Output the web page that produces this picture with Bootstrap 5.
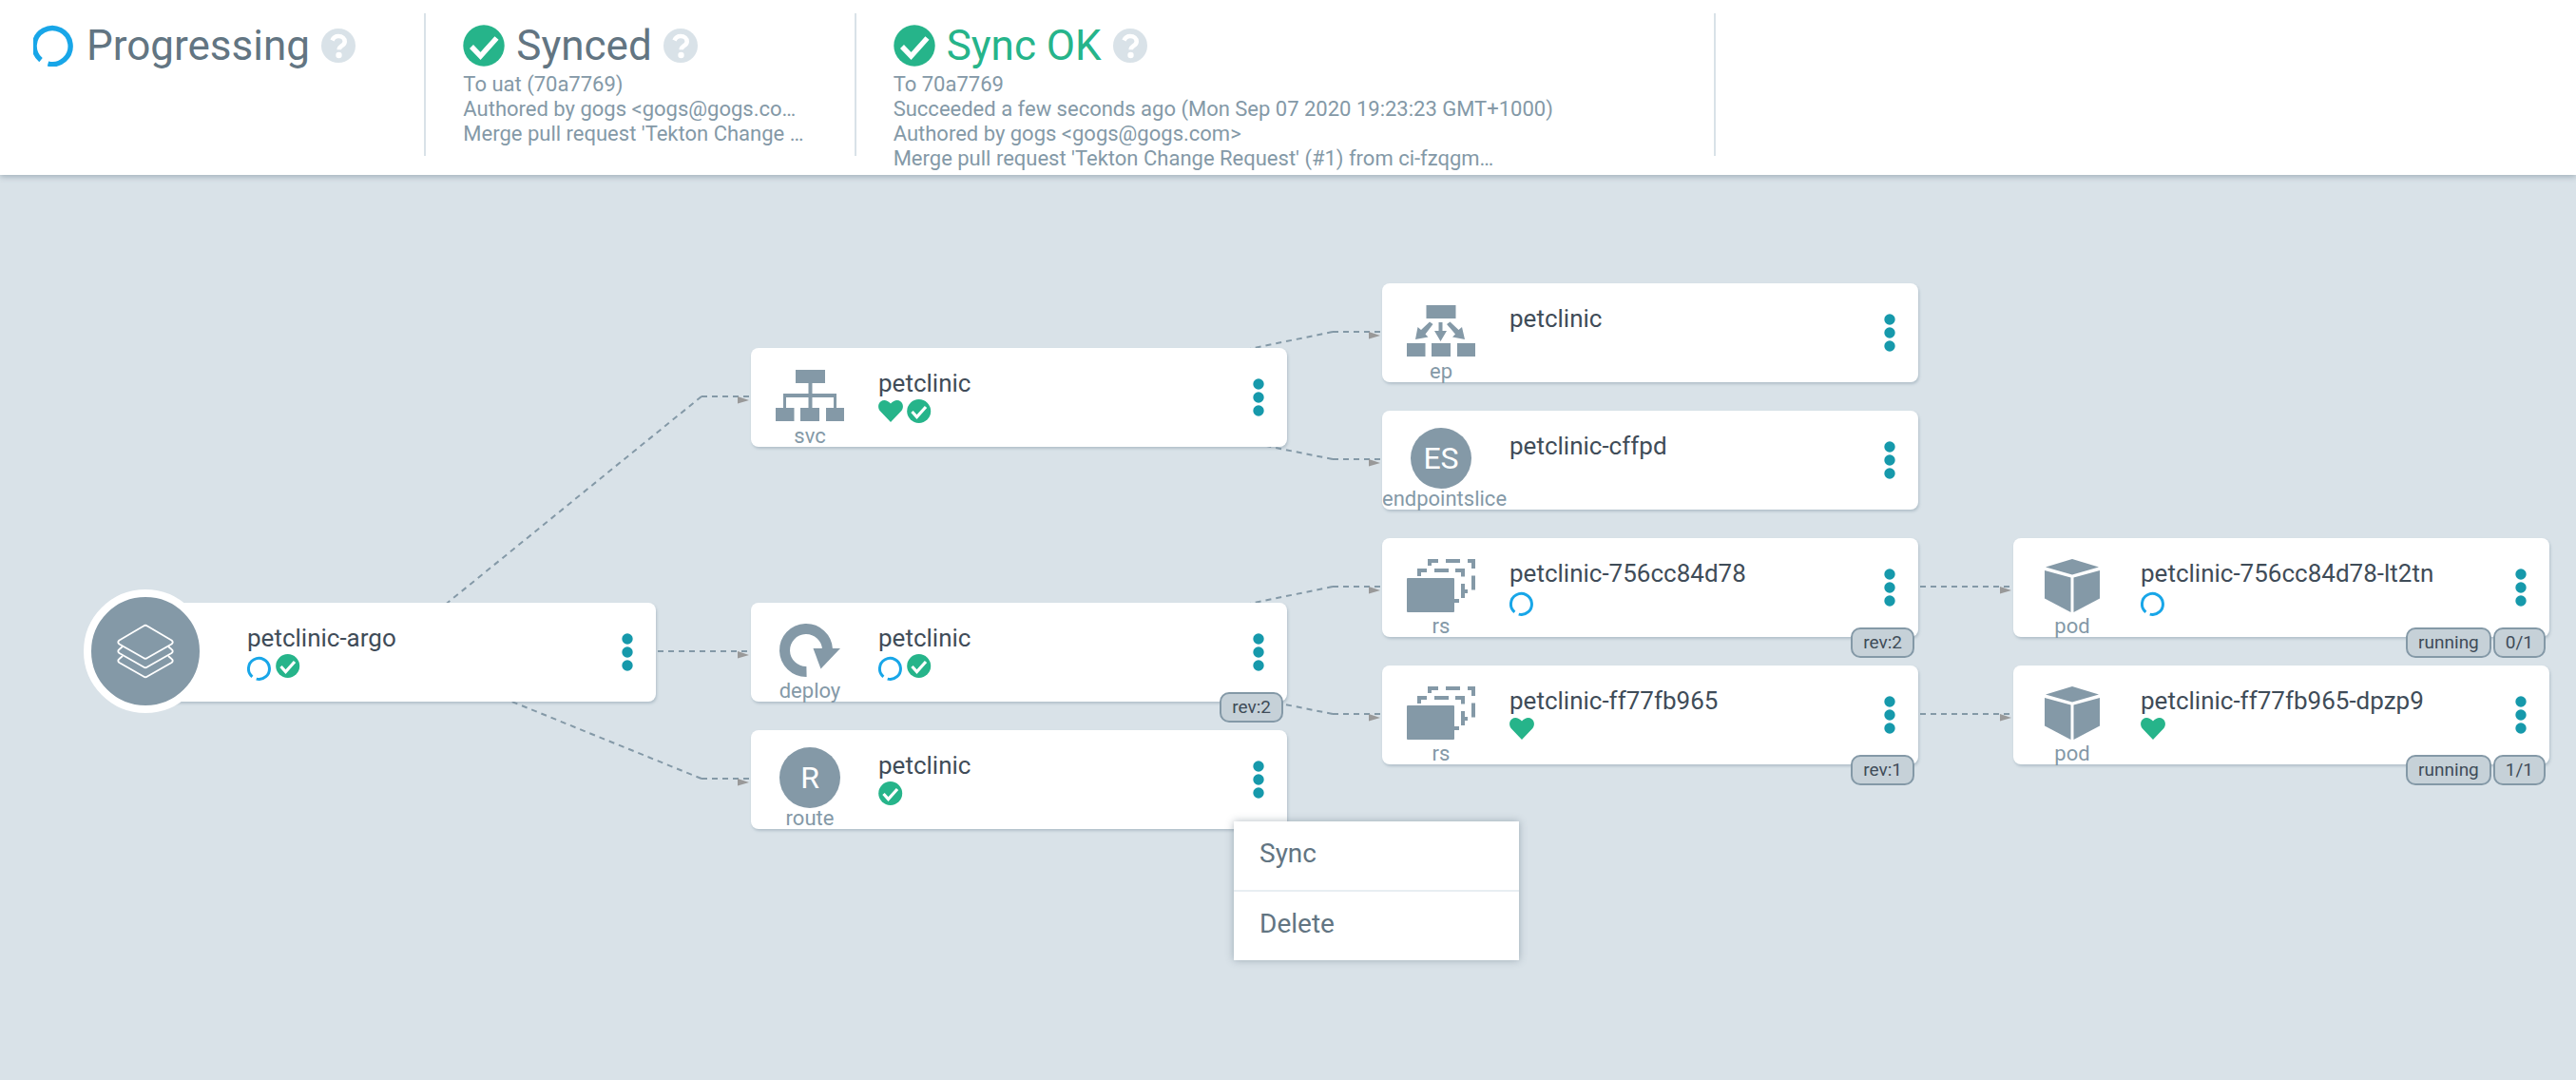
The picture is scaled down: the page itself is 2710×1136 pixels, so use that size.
<!DOCTYPE html>
<html lang="en">
<head>
<meta charset="utf-8">
<meta name="viewport" content="width=device-width, initial-scale=1">
<title>petclinic-argo</title>
<link href="https://cdn.jsdelivr.net/npm/bootstrap@5.3.0/dist/css/bootstrap.min.css" rel="stylesheet">
<style>
  :root { --slate: #8499a7; --ink: #3f4c58; --title: #627582; --canvas: #d9e2e8; --ok: #26b48a; --busy: #18a6e8; --teal: #1699ab; }
  body { font-family: Roboto, "Liberation Sans", sans-serif; background: var(--canvas); color: var(--ink); }
  .status-bar { padding: 14px 0 20px; box-shadow: 0 2px 6px rgba(95, 115, 130, .45); z-index: 2; }
  .status-row { margin-left: -4px; margin-right: 0; }
  .status-item { height: 150px; padding: 0 0 0 39px; border-right: 2px solid var(--canvas); color: var(--slate); font-size: 22px; line-height: 26px; white-space: nowrap; }
  .status-title { font-size: 44px; line-height: 56px; height: 62px; gap: 12px; color: var(--title); font-weight: 400; margin: 0; padding-top: 6px; }
  .status-title.is-ok { color: var(--ok); }
  .status-title svg { width: 44px; height: 44px; }
  .help-btn, .kebab-btn { border: 0; background: none; padding: 0; line-height: 0; }
  .status-title .help-btn svg { width: 36px; height: 36px; }
  .tree { min-height: 840px; }
  .edges { left: 0; top: 0; width: 100%; height: 100%; pointer-events: none; }
  .node { width: 564px; height: 104px; background: #fff; border-radius: 8px; box-shadow: 1px 2px 3px rgba(120, 142, 158, .4); }
  .node-kind { width: 124px; padding-top: 18px; color: var(--slate); font-size: 22px; line-height: 22px; flex: none; align-items: safe center; }
  .node-kind svg { width: 72px; height: 64px; flex: none; }
  .letter { width: 64px; height: 64px; background: var(--slate); color: #fff; font-size: 32px; line-height: 64px; text-align: center; }
  .node-body { padding: 22px 0 0 10px; }
  .node-name { font-size: 26px; line-height: 30px; white-space: nowrap; }
  .node-state { gap: 4px; }
  .node-state svg { width: 26px; height: 30px; }
  .kebab-btn { margin-right: 22px; width: 16px; }
  .kebab-btn svg { width: 12px; height: 42px; }
  .root-disc { left: -38px; top: -14px; width: 130px; height: 130px; border: 8px solid #fff; background: var(--slate); }
  .root-disc svg { width: 60px; height: 60px; }
  .tags { right: 4px; bottom: -22px; gap: 2px; }
  .tag-box { height: 32px; padding: 0 11px; border: 2px solid var(--slate); border-radius: 10px; background: #c6d1d8; font-size: 19px; line-height: 27px; }
  .c0 { left: 126px; } .c1 { left: 790px; } .c2 { left: 1454px; } .c3 { left: 2118px; }
  .r0 { top: 114px; } .r1 { top: 182px; } .r2 { top: 248px; } .r3 { top: 382px; } .r4 { top: 450px; } .r5 { top: 516px; } .r6 { top: 584px; }
  .node-menu { left: 1298px; top: 680px; width: 300px; background: #fff; box-shadow: 0 0 8px rgba(85, 105, 120, .45); }
  .node-menu button { border: 0; background: none; color: var(--title); font-size: 28px; line-height: 32px; padding: 18px 27px 22px; }
  .node-menu li + li { border-top: 2px solid #e8eef2; }
</style>
<script src="https://cdn.jsdelivr.net/npm/bootstrap@5.3.0/dist/js/bootstrap.bundle.min.js"></script>
</head>
<body class="d-flex flex-column min-vh-100">
<svg width="0" height="0" class="position-absolute" aria-hidden="true">
  <symbol id="check" viewBox="0 0 44 44"><circle cx="22" cy="22" r="21.700" fill="#26b48a"/><path d="M9 23l9.500 10L35.500 14" fill="none" stroke="#fff" stroke-width="5.500"/></symbol>
  <symbol id="help" viewBox="0 0 36 36"><circle cx="18" cy="18" r="18" fill="#d9e2e8"/><path d="M11.500 12.500C13 9 15.500 8 18 8c4 0 6.700 2.600 6.700 5.700 0 4.600-6 4.400-6 8.600" fill="none" stroke="#fff" stroke-width="4.600"/><circle cx="18.500" cy="28" r="3.200" fill="#fff"/></symbol>
  <symbol id="s-check" viewBox="0 0 26 30"><circle cx="12.700" cy="14.500" r="12.500" fill="#26b48a"/><path d="M5.500 15l5 5.500L20 10" fill="none" stroke="#fff" stroke-width="3.200"/></symbol>
  <symbol id="s-heart" viewBox="0 0 26 30"><path d="M13 26L1.800 14.200C-.8 11-.3 6.500 2.300 4.400 5.500 2 9.500 2.600 13 6.600c3.500-4 7.500-4.600 10.700-2.200 2.600 2.100 3.100 6.600.5 9.800z" fill="#26b48a"/></symbol>
  <symbol id="s-busy" viewBox="0 0 26 30"><path d="M5.400 25.900A11 11 0 1 1 9.700 28.100" fill="none" stroke="#18a6e8" stroke-width="3"/></symbol>
  <symbol id="dots" viewBox="0 0 12 42"><g fill="#1699ab"><circle cx="6" cy="7" r="5.700"/><circle cx="6" cy="21" r="5.700"/><circle cx="6" cy="35" r="5.700"/></g></symbol>
  <symbol id="k-svc" viewBox="0 0 72 64"><g fill="#8499a7"><path d="M21 5h31v14H21zM0 45h19.500v14H0zM26 45h20v14H26zM53 45h19v14H53z"/><path d="M34.500 19h4v26h-4zM8 30h56v15h-3V34H11v11H8z"/></g></symbol>
  <symbol id="k-ep" viewBox="0 0 72 64"><g fill="#8499a7"><path d="M20.500 5h31v14h-31zM0 45h19.500v14H0zM26 45h20v14H26zM53 45h19v14H53z"/><path d="M33.500 23h4v9h4.500l-6.500 11L29 32h4.500z"/><path d="M24 22.500l3.500 2.500-8 10.500 3 3-13.500 2.500 2.500-13 3.500 3z"/><path d="M45.500 22.500L42 25l9 10.500-3 3L61 41l-3-13-3.500 3z"/></g></symbol>
  <symbol id="k-deploy" viewBox="0 0 72 64"><path d="M32.500 54.500A22.500 22.500 0 1 1 54.500 31" fill="none" stroke="#8499a7" stroke-width="11"/><path d="M39.500 30H68L47.500 51.500z" fill="#8499a7"/></symbol>
  <symbol id="k-rs" viewBox="0 0 72 64"><rect x="0" y="24" width="50" height="36" rx="1" fill="#8499a7"/><g fill="none" stroke="#8499a7" stroke-width="4"><path d="M13 22v-6h8M29 16h15M51 16h8v6.500M59 30v15M59 38h5M50 48h5"/><path d="M24 11V6h9M41 6h15M64 6h6v8M70 21.500v15"/></g></symbol>
  <symbol id="k-pod" viewBox="0 0 72 64"><g fill="#8499a7"><path d="M36 4l28 8.500L36 20.500 8 12.500z"/><path d="M7 16l27.500 7.500V60L7 45.500z"/><path d="M65 16l-27.500 7.500V60L65 45.500z"/></g></symbol>
</svg>

<header class="status-bar bg-white position-relative">
  <div class="row g-0 status-row">
    <section class="col-2 status-item">
      <h1 class="status-title d-flex align-items-center"><svg viewBox="0 0 44 44" aria-hidden="true"><path d="M8 37.200A19 19 0 1 1 15.500 41" fill="none" stroke="#18a6e8" stroke-width="5.400"/></svg>Progressing<button class="help-btn" aria-label="Health help"><svg><use href="#help"/></svg></button></h1>
    </section>
    <section class="col-2 status-item">
      <h2 class="status-title d-flex align-items-center"><svg aria-hidden="true"><use href="#check"/></svg>Synced<button class="help-btn" aria-label="Sync help"><svg><use href="#help"/></svg></button></h2>
      <div>To uat (70a7769)</div>
      <div>Authored by gogs &lt;gogs@gogs.co…</div>
      <div>Merge pull request 'Tekton Change …</div>
    </section>
    <section class="col-4 status-item">
      <h2 class="status-title is-ok d-flex align-items-center"><svg aria-hidden="true"><use href="#check"/></svg>Sync OK<button class="help-btn" aria-label="Operation help"><svg><use href="#help"/></svg></button></h2>
      <div>To 70a7769</div>
      <div>Succeeded a few seconds ago (Mon Sep 07 2020 19:23:23 GMT+1000)</div>
      <div>Authored by gogs &lt;gogs@gogs.com&gt;</div>
      <div>Merge pull request 'Tekton Change Request' (#1) from ci-fzqgm…</div>
    </section>
  </div>
</header>

<main class="tree position-relative flex-fill">
  <svg class="edges position-absolute" aria-hidden="true">
    <defs><path id="tip" d="M0 0l12 4-12 3.500z" fill="#999"/></defs>
    <g fill="none" stroke="#8499a7" stroke-width="2" stroke-dasharray="6 5">
      <path d="M738 233L408 501"/><path d="M738 233h50"/>
      <path d="M692 501h96"/>
      <path d="M738 635L408 501"/><path d="M738 635h50"/>
      <path d="M1402 165L1072 233"/><path d="M1402 165h50"/>
      <path d="M1402 299L1072 233"/><path d="M1402 299h50"/>
      <path d="M1402 433L1072 501"/><path d="M1402 433h50"/>
      <path d="M1402 567L1072 501"/><path d="M1402 567h50"/>
      <path d="M2020 433h96"/><path d="M2020 567h96"/>
    </g>
    <use href="#tip" x="776" y="233"/><use href="#tip" x="776" y="501"/><use href="#tip" x="776" y="635"/>
    <use href="#tip" x="1440" y="165"/><use href="#tip" x="1440" y="299"/><use href="#tip" x="1440" y="433"/><use href="#tip" x="1440" y="567"/>
    <use href="#tip" x="2104" y="433"/><use href="#tip" x="2104" y="567"/>
  </svg>

  <article class="node c0 r4 position-absolute d-flex">
    <div class="root-disc position-absolute rounded-circle d-flex align-items-center justify-content-center">
      <svg viewBox="0 0 60 60" fill="none" stroke="#fff" stroke-width="1.800" stroke-linejoin="round" aria-hidden="true"><path d="M28 3.500q2-1.500 4 0L57.500 18.500q2.500 2 0 4L32 37q-2 1.500-4 0L2.500 22.500q-2.500-2 0-4z"/><path d="M6 25l-3.500 3q-2.500 2 0 4L28 46.500q2 1.500 4 0L57.500 32q2.500-2 0-4L54 25"/><path d="M6 35l-3.500 3q-2.500 2 0 4L28 56.500q2 1.500 4 0L57.500 42q2.500-2 0-4L54 35"/></svg>
    </div>
    <div class="node-kind"></div>
    <div class="node-body flex-fill"><div class="node-name">petclinic-argo</div><div class="node-state d-flex"><svg><use href="#s-busy"/></svg><svg><use href="#s-check"/></svg></div></div>
    <button class="kebab-btn" aria-label="Actions"><svg><use href="#dots"/></svg></button>
  </article>

  <article class="node c1 r1 position-absolute d-flex">
    <div class="node-kind d-flex flex-column"><svg><use href="#k-svc"/></svg><span>svc</span></div>
    <div class="node-body flex-fill"><div class="node-name">petclinic</div><div class="node-state d-flex"><svg><use href="#s-heart"/></svg><svg><use href="#s-check"/></svg></div></div>
    <button class="kebab-btn" aria-label="Actions"><svg><use href="#dots"/></svg></button>
  </article>

  <article class="node c1 r4 position-absolute d-flex">
    <div class="node-kind d-flex flex-column"><svg><use href="#k-deploy"/></svg><span>deploy</span></div>
    <div class="node-body flex-fill"><div class="node-name">petclinic</div><div class="node-state d-flex"><svg><use href="#s-busy"/></svg><svg><use href="#s-check"/></svg></div></div>
    <button class="kebab-btn" aria-label="Actions"><svg><use href="#dots"/></svg></button>
    <div class="tags position-absolute d-flex"><span class="tag-box">rev:2</span></div>
  </article>

  <article class="node c1 r6 position-absolute d-flex">
    <div class="node-kind d-flex flex-column"><span class="letter rounded-circle">R</span><span>route</span></div>
    <div class="node-body flex-fill"><div class="node-name">petclinic</div><div class="node-state d-flex"><svg><use href="#s-check"/></svg></div></div>
    <button class="kebab-btn" aria-label="Actions"><svg><use href="#dots"/></svg></button>
  </article>

  <article class="node c2 r0 position-absolute d-flex">
    <div class="node-kind d-flex flex-column"><svg><use href="#k-ep"/></svg><span>ep</span></div>
    <div class="node-body flex-fill"><div class="node-name">petclinic</div></div>
    <button class="kebab-btn" aria-label="Actions"><svg><use href="#dots"/></svg></button>
  </article>

  <article class="node c2 r2 position-absolute d-flex">
    <div class="node-kind d-flex flex-column"><span class="letter rounded-circle">ES</span><span>endpointslice</span></div>
    <div class="node-body flex-fill"><div class="node-name">petclinic-cffpd</div></div>
    <button class="kebab-btn" aria-label="Actions"><svg><use href="#dots"/></svg></button>
  </article>

  <article class="node c2 r3 position-absolute d-flex">
    <div class="node-kind d-flex flex-column"><svg><use href="#k-rs"/></svg><span>rs</span></div>
    <div class="node-body flex-fill"><div class="node-name">petclinic-756cc84d78</div><div class="node-state d-flex"><svg><use href="#s-busy"/></svg></div></div>
    <button class="kebab-btn" aria-label="Actions"><svg><use href="#dots"/></svg></button>
    <div class="tags position-absolute d-flex"><span class="tag-box">rev:2</span></div>
  </article>

  <article class="node c2 r5 position-absolute d-flex">
    <div class="node-kind d-flex flex-column"><svg><use href="#k-rs"/></svg><span>rs</span></div>
    <div class="node-body flex-fill"><div class="node-name">petclinic-ff77fb965</div><div class="node-state d-flex"><svg><use href="#s-heart"/></svg></div></div>
    <button class="kebab-btn" aria-label="Actions"><svg><use href="#dots"/></svg></button>
    <div class="tags position-absolute d-flex"><span class="tag-box">rev:1</span></div>
  </article>

  <article class="node c3 r3 position-absolute d-flex">
    <div class="node-kind d-flex flex-column"><svg><use href="#k-pod"/></svg><span>pod</span></div>
    <div class="node-body flex-fill"><div class="node-name">petclinic-756cc84d78-lt2tn</div><div class="node-state d-flex"><svg><use href="#s-busy"/></svg></div></div>
    <button class="kebab-btn" aria-label="Actions"><svg><use href="#dots"/></svg></button>
    <div class="tags position-absolute d-flex"><span class="tag-box">running</span><span class="tag-box">0/1</span></div>
  </article>

  <article class="node c3 r5 position-absolute d-flex">
    <div class="node-kind d-flex flex-column"><svg><use href="#k-pod"/></svg><span>pod</span></div>
    <div class="node-body flex-fill"><div class="node-name">petclinic-ff77fb965-dpzp9</div><div class="node-state d-flex"><svg><use href="#s-heart"/></svg></div></div>
    <button class="kebab-btn" aria-label="Actions"><svg><use href="#dots"/></svg></button>
    <div class="tags position-absolute d-flex"><span class="tag-box">running</span><span class="tag-box">1/1</span></div>
  </article>

  <ul class="node-menu position-absolute list-unstyled m-0">
    <li><button class="w-100 text-start">Sync</button></li>
    <li><button class="w-100 text-start">Delete</button></li>
  </ul>
</main>
</body>
</html>
